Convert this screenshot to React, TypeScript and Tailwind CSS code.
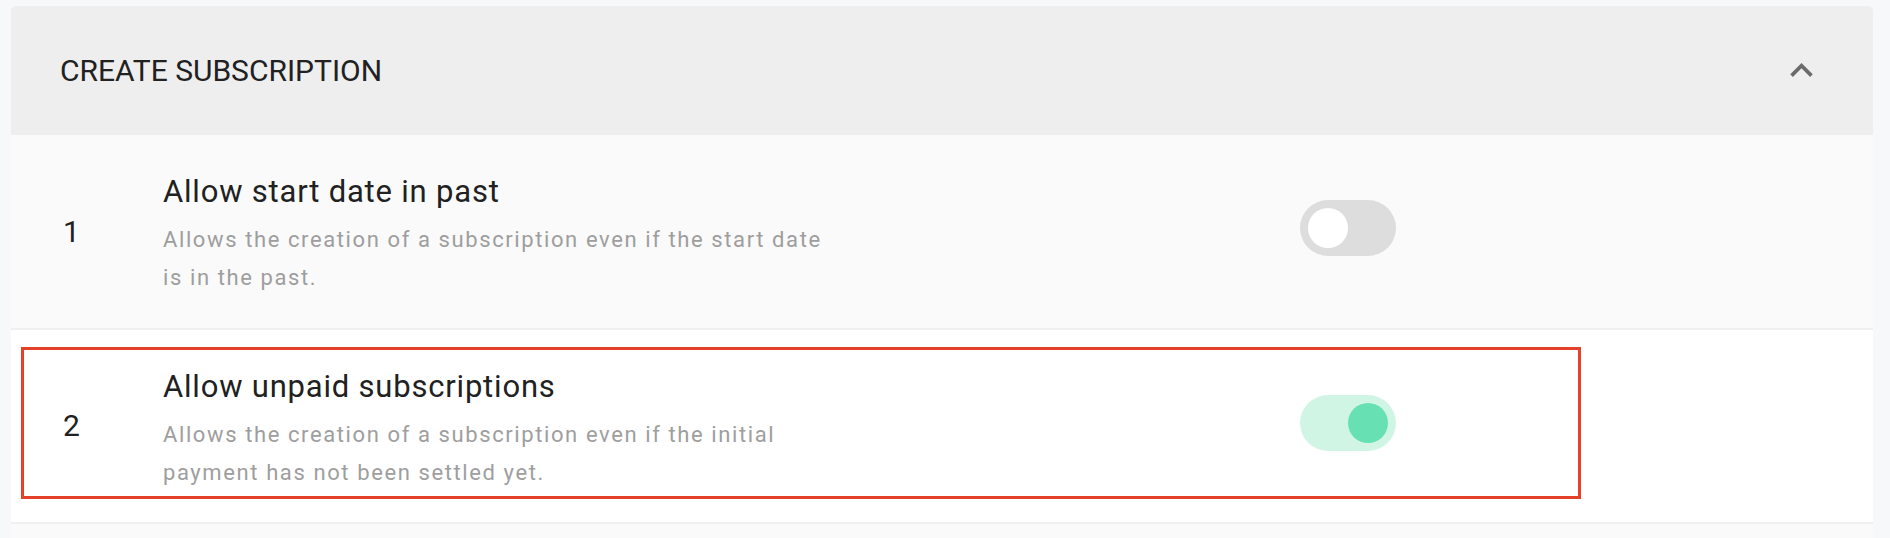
import { useState } from "react"

interface Setting {
    id: number
    title: string
    description: string
    enabled: boolean
}

const initialSettings: Setting[] = [
    {
        id: 1,
        title: "Allow start date in past",
        description: "Allows the creation of a subscription even if the start date is in the past.",
        enabled: false,
    },
    {
        id: 2,
        title: "Allow unpaid subscriptions",
        description: "Allows the creation of a subscription even if the initial payment has not been settled yet.",
        enabled: true,
    },
]

function Toggle({ on, onChange }: { on: boolean; onChange: () => void }) {
    return (
        <button
            onClick={onChange}
            className={
                "flex items-center w-[96px] h-[56px] rounded-full px-[8px] cursor-pointer " +
                (on ? "bg-[#d0f5e5] justify-end" : "bg-[#dddddd] justify-start")
            }
        >
            <span className={"block w-[40px] h-[40px] rounded-full " + (on ? "bg-[#67e1b3]" : "bg-white")} />
        </button>
    )
}

export default function App() {
    const [settings, setSettings] = useState(initialSettings)
    const [open, setOpen] = useState(true)

    function toggle(id: number) {
        setSettings(settings.map((s) => (s.id === id ? { ...s, enabled: !s.enabled } : s)))
    }

    return (
        <div className="h-[538px] overflow-hidden bg-[#f7f8fa] pt-[6px] pl-[11px] pr-[17px] font-['Roboto',sans-serif]">
            <div className="rounded-t-[5px] overflow-hidden">
                {/* Kopfzeile */}
                <div className="h-[129px] bg-[#eeeeee] flex items-center justify-between px-[49px]">
                    <span className="text-[30px] text-[#212121] leading-none">CREATE SUBSCRIPTION</span>
                    <button onClick={() => setOpen(!open)} className="w-[45px] h-[45px] cursor-pointer">
                        <svg viewBox="0 0 24 24" className="w-[45px] h-[45px]" fill="#6b6b6b">
                            <path d={open ? "M12 8l-6 6 1.41 1.41L12 10.83l4.59 4.58L18 14z" : "M16.59 8.59 12 13.17 7.41 8.59 6 10l6 6 6-6z"} />
                        </svg>
                    </button>
                </div>

                {open &&
                    settings.map((s, i) => (
                        <div
                            key={s.id}
                            className={
                                "relative flex items-center border-b-2 border-[#f0f0f0] " +
                                (i === 0 ? "h-[195px] bg-[#fafafa]" : "h-[194px] bg-white")
                            }
                        >
                            <span className="w-[152px] pl-[52px] text-[30px] text-[#212121] leading-none">{s.id}</span>
                            <div className="w-[1137px] mt-[8px]">
                                <div className="text-[31px] leading-[36px] tracking-[0.8px] text-[#212121]">{s.title}</div>
                                <p className="mt-[11px] w-[672px] text-[22px] leading-[38px] tracking-[1.6px] text-[#9e9e9e]">
                                    {s.description}
                                </p>
                            </div>
                            <div className="-mt-[7px]">
                                <Toggle on={s.enabled} onChange={() => toggle(s.id)} />
                            </div>

                            {/* Markierung */}
                            {i === 1 && (
                                <div className="absolute left-[10px] top-[17px] w-[1560px] h-[152px] border-[3px] border-[#e5412a] pointer-events-none" />
                            )}
                        </div>
                    ))}

                <div className="h-[40px] bg-[#fafafa]" />
            </div>
        </div>
    )
}
